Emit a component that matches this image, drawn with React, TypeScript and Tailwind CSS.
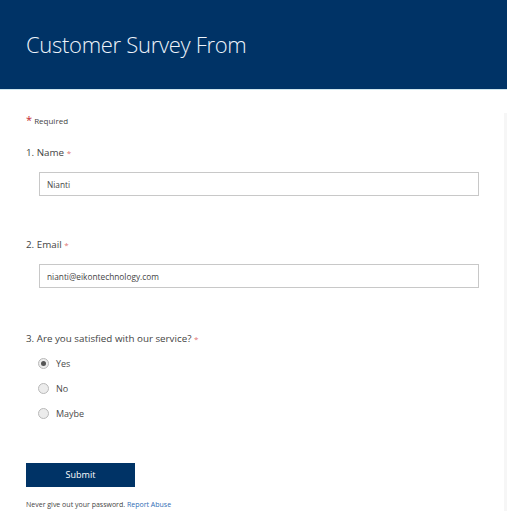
import { useState } from "react";

const font = { fontFamily: '"Open Sans", "Noto Sans", sans-serif' };

function Radio({
  label,
  checked,
  onSelect,
}: {
  label: string;
  checked: boolean;
  onSelect: () => void;
}) {
  return (
    <label
      className="flex h-[25px] cursor-pointer items-center pl-[12px]"
      onClick={onSelect}
    >
      <span className="flex h-[11px] w-[11px] items-center justify-center rounded-full border border-[#b9b9b9] bg-[#ececec]">
        {checked && <span className="h-[5px] w-[5px] rounded-full bg-[#555]" />}
      </span>
      <span className="ml-[7px] text-[9px] text-[#4a4a4a]">{label}</span>
    </label>
  );
}

export default function App() {
  const [name, setName] = useState("Nianti");
  const [email, setEmail] = useState("nianti@eikontechnology.com");
  const [choice, setChoice] = useState("Yes");

  return (
    <div className="h-[516px] w-[507px] overflow-hidden bg-white" style={font}>
      <div className="flex h-[90px] items-center border-b border-[#cfe6ee] bg-[#003366] px-[26px]">
        <h1 className="text-[22px] font-light tracking-[-0.3px] text-[#eef4fb]">
          Customer Survey From
        </h1>
      </div>

      <div className="border-r-[3px] border-[#f6f6f6] px-[26px]">
        <div className="mt-[23px] h-[14px] text-[8px] leading-[14px] text-[#444]">
          <span className="text-[11px] text-[#c4262e]">*</span> Required
        </div>

        <div className="mt-[18px] h-[16px] text-[9.8px] leading-[16px] text-[#444]">
          1. Name <span className="text-[8px] text-[#e0736f]">*</span>
        </div>
        <input
          value={name}
          onChange={(e) => setName(e.target.value)}
          className="ml-[13px] mt-[11px] block h-[24px] w-[440px] border border-[#c8c8c8] px-[7px] text-[8.3px] text-[#444] outline-none"
        />

        <div className="mt-[41px] h-[16px] text-[9.8px] leading-[16px] text-[#444]">
          2. Email <span className="text-[8px] text-[#e0736f]">*</span>
        </div>
        <input
          value={email}
          onChange={(e) => setEmail(e.target.value)}
          className="ml-[13px] mt-[11px] block h-[24px] w-[440px] border border-[#c8c8c8] px-[7px] text-[8.3px] text-[#444] outline-none"
        />

        <div className="mt-[43px] h-[16px] text-[9.8px] leading-[16px] text-[#444]">
          3. Are you satisfied with our service?{" "}
          <span className="text-[8px] text-[#e0736f]">*</span>
        </div>
        <div className="mt-[4px] flex flex-col">
          {["Yes", "No", "Maybe"].map((opt) => (
            <Radio
              key={opt}
              label={opt}
              checked={choice === opt}
              onSelect={() => setChoice(opt)}
            />
          ))}
        </div>

        <button className="mt-[37px] flex h-[24px] w-[109px] items-center justify-center bg-[#003366] text-[9px] text-white">
          Submit
        </button>

        <div className="mt-[12px] h-[12px] text-[7px] leading-[12px] text-[#444]">
          Never give out your password.{" "}
          <a href="#" className="text-[#2f6db5]">
            Report Abuse
          </a>
        </div>
      </div>
    </div>
  );
}
